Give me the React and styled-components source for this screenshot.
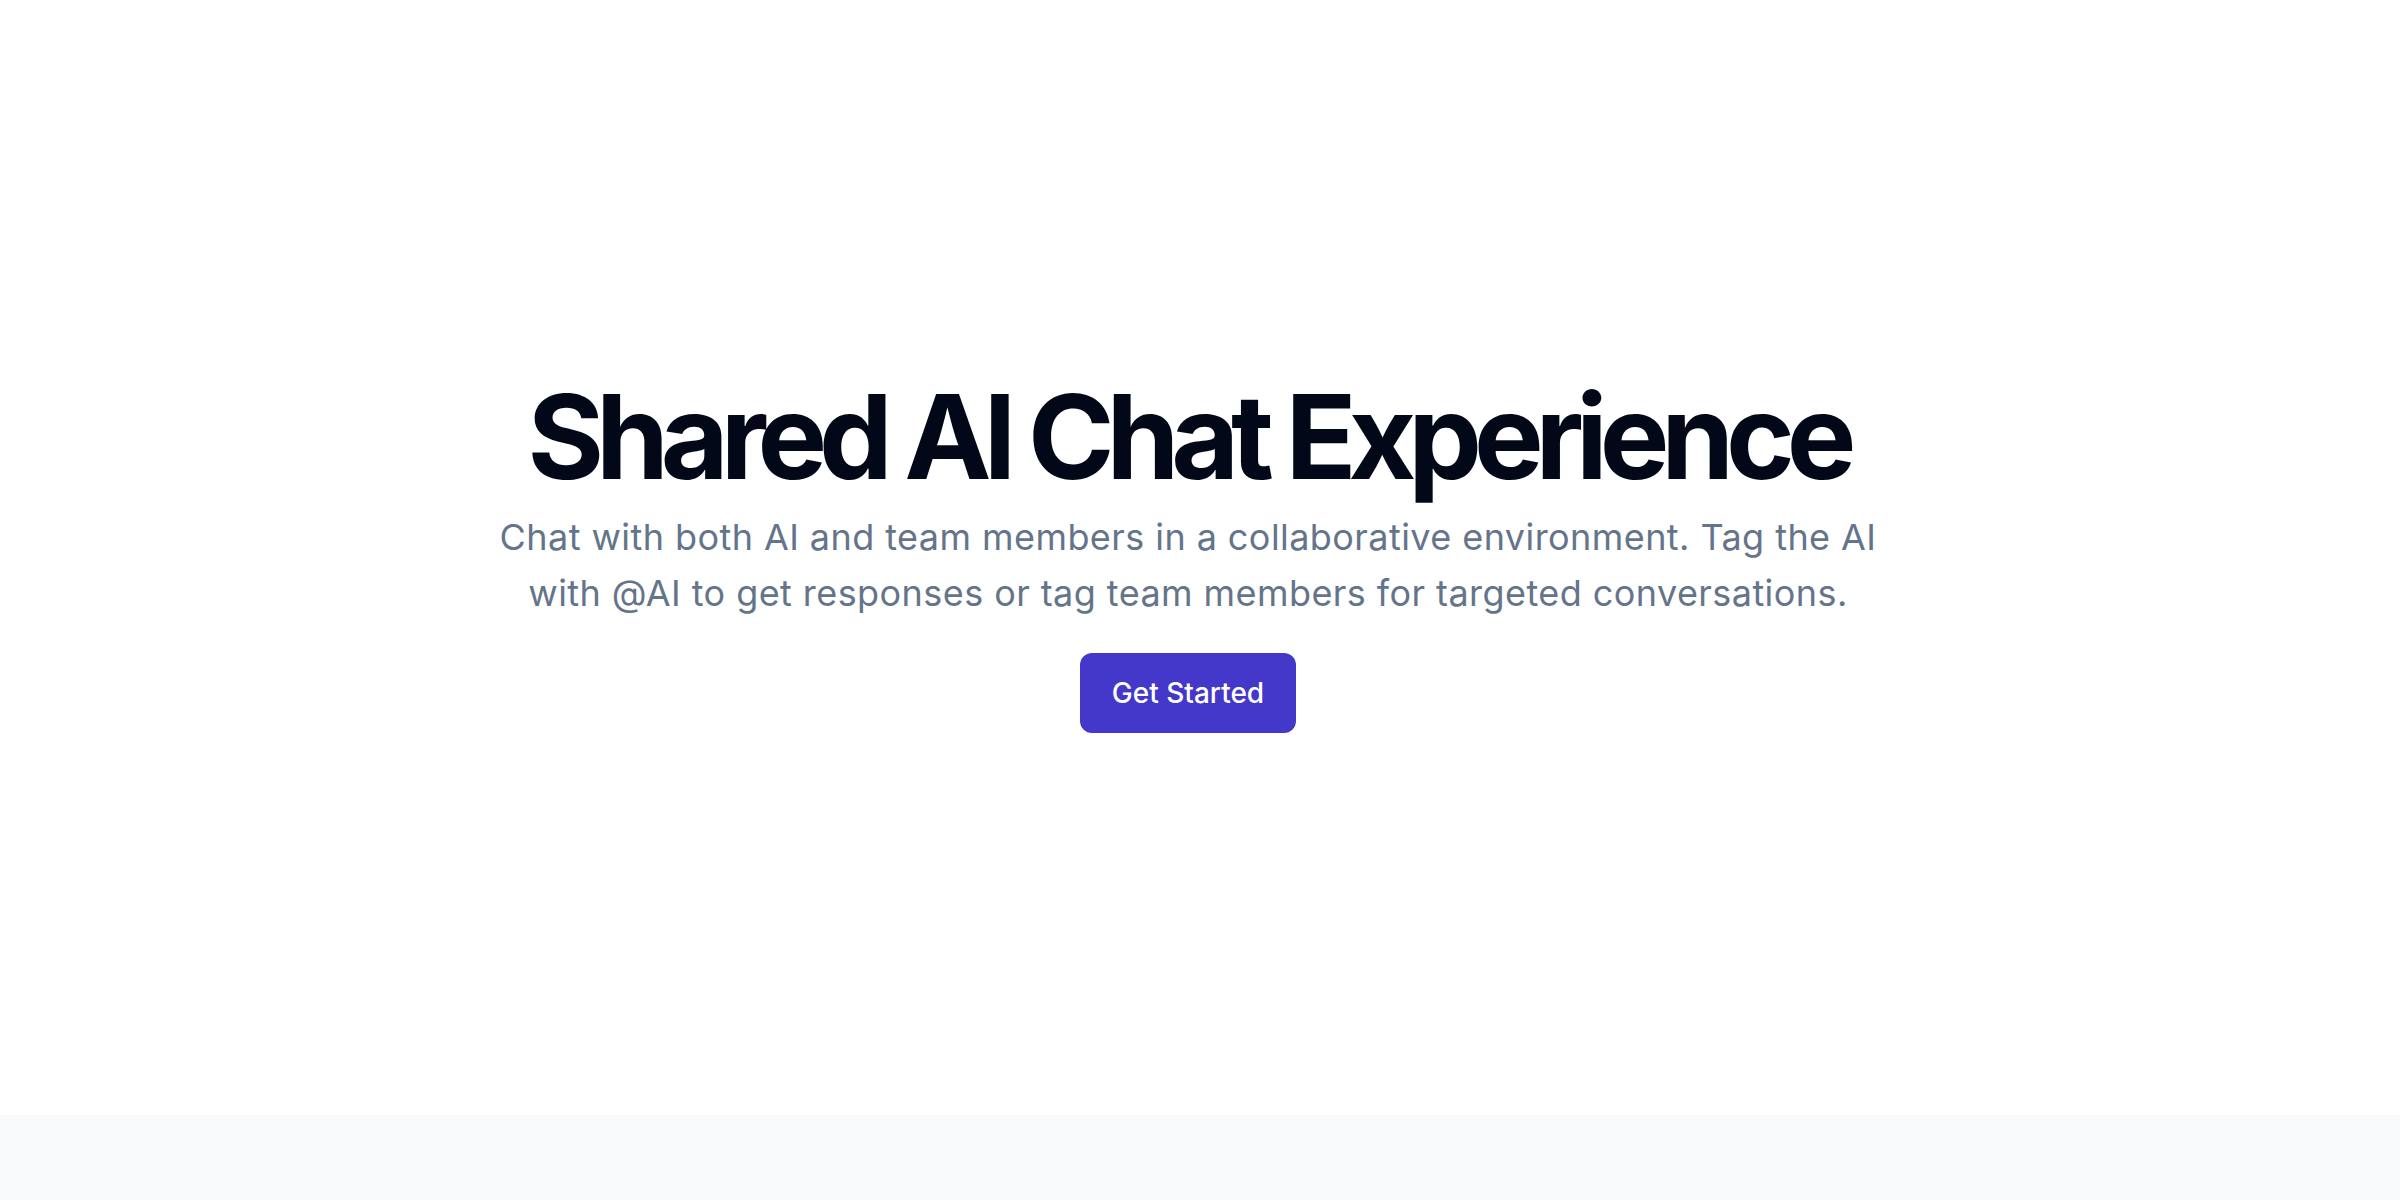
import React from "react";
import styled, { createGlobalStyle } from "styled-components";

const GlobalStyle = createGlobalStyle`
  * {
    box-sizing: border-box;
  }
  body {
    margin: 0;
    background: #ffffff;
    font-family: Inter, "Noto Sans", "Liberation Sans", sans-serif;
    -webkit-font-smoothing: antialiased;
  }
`;

function App() {
  return (
    <Page>
      <GlobalStyle />
      <Hero>
        <Content>
          <Title>Shared AI Chat Experience</Title>
          <Lead>
            Chat with both AI and team members in a collaborative environment. Tag the AI
            with @AI to get responses or tag team members for targeted conversations.
          </Lead>
          <Actions>
            <PrimaryButton type="button">Get Started</PrimaryButton>
          </Actions>
        </Content>
      </Hero>
      <Footer />
    </Page>
  );
}

const Page = styled.div`
  width: 100%;
  min-height: 100vh;
  display: flex;
  flex-direction: column;
`;

const Hero = styled.section`
  height: 1115px;
  padding: 0 24px 4px 0;
  display: flex;
  align-items: center;
  justify-content: center;
  background: #ffffff;
`;

const Content = styled.div`
  display: flex;
  flex-direction: column;
  align-items: center;
  text-align: center;
`;

const Title = styled.h1`
  margin: 0;
  font-size: 117px;
  line-height: 1;
  font-weight: 700;
  letter-spacing: -0.069em;
  color: #020817;
`;

const Lead = styled.p`
  margin: 14px 0 0;
  max-width: 1400px;
  font-size: 36px;
  line-height: 56px;
  font-weight: 400;
  letter-spacing: 0.012em;
  color: #64748b;
`;

const Actions = styled.div`
  margin-top: 32px;
  display: flex;
  gap: 16px;
`;

const PrimaryButton = styled.button`
  height: 80px;
  padding: 0 32px;
  border: none;
  border-radius: 12px;
  background: #4338ca;
  color: #ffffff;
  font-family: inherit;
  font-size: 28px;
  font-weight: 500;
  cursor: pointer;
`;

const Footer = styled.footer`
  flex: 1;
  min-height: 85px;
  background: #f9fafb;
`;

export default App;
